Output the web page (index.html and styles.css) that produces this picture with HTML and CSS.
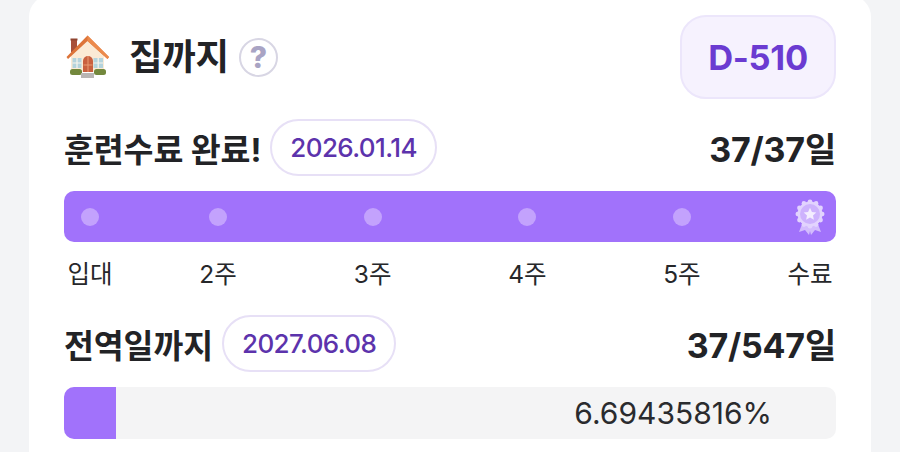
FILE: index.html
```html
<!DOCTYPE html>
<html lang="ko">
<head>
<meta charset="utf-8">
<title>집까지</title>
<link rel="stylesheet" href="styles.css">
</head>
<body>
<main class="card">
  <header class="head">
    <div class="head-left">
      <svg class="house" viewBox="0 0 44 44" aria-hidden="true">
        <rect x="5" y="4" width="6" height="13" fill="#a8503a"/>
        <rect x="4.500" y="3.500" width="7" height="2" fill="#8f4430"/>
        <path d="M21.500 3 38 19v18H5V19z" fill="#fbead5"/>
        <rect x="6.500" y="23" width="9" height="10" fill="#b4d3dc"/>
        <path d="M11 23v10M6.500 28h9" stroke="#f8f4ec" stroke-width="1.200"/>
        <rect x="27.500" y="23" width="9.500" height="10" fill="#b4d3dc"/>
        <path d="M32.200 23v10M27.500 28h9.500" stroke="#f8f4ec" stroke-width="1.200"/>
        <path d="M17 37V26a5 5 0 0 1 10 0v11z" fill="#c9603f"/>
        <path d="M17.500 30h9M22 21v16" stroke="#e89a72" stroke-width="1"/>
        <path d="M0.500 22 21.500 0.500 43 22 41.500 24 21.500 6 2 24z" fill="#dd7439"/>
        <path d="M21.500 0.500 43 22 41.500 24 21.500 6z" fill="#ec8a4c"/>
        <rect x="4" y="34" width="12" height="6" rx="2.500" fill="#73883d"/>
        <rect x="28" y="34" width="12" height="6" rx="2.500" fill="#73883d"/>
        <rect x="15" y="38" width="13" height="5" fill="#b9b6b4"/>
      </svg>
      <h1 class="title">집까지</h1>
      <span class="help">?</span>
    </div>
    <div class="dday">D-510</div>
  </header>

  <section class="block">
    <div class="row">
      <div class="row-left">
        <h2 class="label">훈련수료 완료!</h2>
        <span class="chip">2026.01.14</span>
      </div>
      <strong class="count">37/37일</strong>
    </div>
    <div class="steps-bar">
      <span class="cell"><i class="dot"></i></span>
      <span class="cell"><i class="dot"></i></span>
      <span class="cell"><i class="dot"></i></span>
      <span class="cell"><i class="dot"></i></span>
      <span class="cell"><i class="dot"></i></span>
      <span class="cell">
        <svg class="medal" viewBox="0 0 30 36" aria-hidden="true">
          <path d="M9 20 4 33l6-2 4 5 3-12z" fill="#d3bcfd"/>
          <path d="M21 20 26 33l-6-2-4 5-3-12z" fill="#d3bcfd"/>
          <g fill="#e2d3fe">
            <circle cx="15" cy="15" r="12.500"/>
            <circle cx="15" cy="2.800" r="2.300"/><circle cx="21.100" cy="4.400" r="2.300"/>
            <circle cx="25.600" cy="8.900" r="2.300"/><circle cx="27.200" cy="15" r="2.300"/>
            <circle cx="25.600" cy="21.100" r="2.300"/><circle cx="21.100" cy="25.600" r="2.300"/>
            <circle cx="15" cy="27.200" r="2.300"/><circle cx="8.900" cy="25.600" r="2.300"/>
            <circle cx="4.400" cy="21.100" r="2.300"/><circle cx="2.800" cy="15" r="2.300"/>
            <circle cx="4.400" cy="8.900" r="2.300"/><circle cx="8.900" cy="4.400" r="2.300"/>
          </g>
          <circle cx="15" cy="15" r="10" fill="#cdb2fd"/>
          <path d="m15 8.800 1.900 4.100 4.400.5-3.300 3 .9 4.400-3.900-2.200-3.900 2.200.9-4.400-3.300-3 4.400-.5z" fill="#f3edff"/>
        </svg>
      </span>
    </div>
    <div class="steps-labels">
      <span>입대</span><span>2주</span><span>3주</span><span>4주</span><span>5주</span><span>수료</span>
    </div>
  </section>

  <section class="block block-last">
    <div class="row">
      <div class="row-left">
        <h2 class="label">전역일까지</h2>
        <span class="chip">2027.06.08</span>
      </div>
      <strong class="count">37/547일</strong>
    </div>
    <div class="progress">
      <div class="fill" style="width: 6.7%"></div>
      <span class="percent">6.69435816%</span>
    </div>
  </section>
</main>
</body>
</html>
```

FILE: styles.css
```css
* { box-sizing: border-box; }

html, body {
  margin: 0;
  height: 452px;
  overflow: hidden;
  background: #f3f4f6;
}

body {
  font-family: Inter, "Noto Sans CJK KR", sans-serif;
  color: #222326;
}

.card {
  margin: -5px 29px 0;
  height: 457px;
  padding: 20px 35px 0;
  background: #fff;
  border-radius: 22px 22px 0 0;
}

.head {
  display: flex;
  justify-content: space-between;
  align-items: center;
}

.head-left {
  display: flex;
  align-items: center;
}

.house {
  width: 44px;
  height: 44px;
  margin: 0 19px 0 2px;
}

.title {
  margin: 0 10px 0 0;
  font-size: 36.500px;
  font-weight: 700;
  line-height: 44px;
  letter-spacing: -0.3px;
}

.help {
  width: 39px;
  height: 39px;
  border: 2.500px solid #d8d6e4;
  border-radius: 50%;
  display: flex;
  align-items: center;
  justify-content: center;
  color: #a9a4c4;
  font-size: 30px;
  font-weight: 800;
}

.dday {
  width: 156px;
  height: 84px;
  display: flex;
  align-items: center;
  justify-content: center;
  background: #f6f2fe;
  border: 2px solid #ece6fb;
  border-radius: 26px;
  color: #6b3bd1;
  font-size: 34.500px;
  font-weight: 700;
  letter-spacing: -0.3px;
}

.block { margin-top: 20px; }

.row {
  display: flex;
  justify-content: space-between;
  align-items: center;
  height: 56px;
}

.row-left {
  display: flex;
  align-items: center;
  gap: 9px;
}

.label {
  margin: 0;
  font-size: 32.500px;
  font-weight: 700;
  letter-spacing: -0.1px;
}

.chip {
  height: 57px;
  padding: 0 18px;
  display: flex;
  align-items: center;
  border: 2px solid #e7e0f6;
  border-radius: 29px;
  color: #5c33ac;
  font-size: 26px;
  font-weight: 500;
  letter-spacing: -0.6px;
}

.count {
  font-size: 34px;
  font-weight: 700;
  letter-spacing: -0.2px;
}

.steps-bar,
.steps-labels {
  display: grid;
  grid-template-columns: 52px repeat(4, 1fr) 52px;
  column-gap: 49.500px;
  justify-items: center;
}

.steps-bar {
  margin-top: 16px;
  height: 51px;
  align-items: center;
  background: #a172fb;
  border-radius: 10px;
}

.cell {
  display: flex;
  justify-content: center;
  align-items: center;
  height: 51px;
  overflow: visible;
}

.dot {
  width: 18px;
  height: 18px;
  border-radius: 50%;
  background: #c3a2fd;
}

.medal {
  width: 30px;
  height: 36px;
  flex: none;
}

.steps-labels {
  margin-top: 15px;
  font-size: 24.500px;
  line-height: 34px;
  color: #26272a;
}

.block-last { margin-top: 24px; }

.progress {
  margin-top: 16px;
  height: 52px;
  display: flex;
  align-items: center;
  justify-content: space-between;
  background: #f4f4f5;
  border-radius: 10px;
  overflow: hidden;
}

.fill {
  height: 100%;
  background: #a172fb;
}

.percent {
  margin-right: 64px;
  font-size: 30px;
  color: #2a2b2e;
}
```
